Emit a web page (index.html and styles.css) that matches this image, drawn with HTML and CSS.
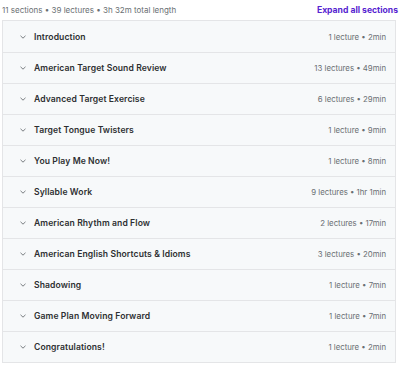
FILE: index.html
```html
<!DOCTYPE html>
<html lang="en">
<head>
    <meta charset="UTF-8">
    <title>Course content</title>
    <link rel="stylesheet" href="styles.css">
</head>
<body>
    <div class="curriculum">
        <div class="summary">
            <span>11 sections • 39 lectures • 3h 32m total length</span>
            <a class="expand" href="#">Expand all sections</a>
        </div>
        <div class="sections">
            <div class="section"><span class="chev"><svg width="6" height="4" viewBox="0 0 6 4"><path d="M0.5 0.8l2.5 2.4 2.5-2.4" fill="none" stroke="#6a6f73" stroke-width="0.9"/></svg></span><span class="title">Introduction</span><span class="meta">1 lecture • 2min</span></div>
            <div class="section"><span class="chev"><svg width="6" height="4" viewBox="0 0 6 4"><path d="M0.5 0.8l2.5 2.4 2.5-2.4" fill="none" stroke="#6a6f73" stroke-width="0.9"/></svg></span><span class="title">American Target Sound Review</span><span class="meta">13 lectures • 49min</span></div>
            <div class="section"><span class="chev"><svg width="6" height="4" viewBox="0 0 6 4"><path d="M0.5 0.8l2.5 2.4 2.5-2.4" fill="none" stroke="#6a6f73" stroke-width="0.9"/></svg></span><span class="title">Advanced Target Exercise</span><span class="meta">6 lectures • 29min</span></div>
            <div class="section"><span class="chev"><svg width="6" height="4" viewBox="0 0 6 4"><path d="M0.5 0.8l2.5 2.4 2.5-2.4" fill="none" stroke="#6a6f73" stroke-width="0.9"/></svg></span><span class="title">Target Tongue Twisters</span><span class="meta">1 lecture • 9min</span></div>
            <div class="section"><span class="chev"><svg width="6" height="4" viewBox="0 0 6 4"><path d="M0.5 0.8l2.5 2.4 2.5-2.4" fill="none" stroke="#6a6f73" stroke-width="0.9"/></svg></span><span class="title">You Play Me Now!</span><span class="meta">1 lecture • 8min</span></div>
            <div class="section"><span class="chev"><svg width="6" height="4" viewBox="0 0 6 4"><path d="M0.5 0.8l2.5 2.4 2.5-2.4" fill="none" stroke="#6a6f73" stroke-width="0.9"/></svg></span><span class="title">Syllable Work</span><span class="meta">9 lectures • 1hr 1min</span></div>
            <div class="section"><span class="chev"><svg width="6" height="4" viewBox="0 0 6 4"><path d="M0.5 0.8l2.5 2.4 2.5-2.4" fill="none" stroke="#6a6f73" stroke-width="0.9"/></svg></span><span class="title">American Rhythm and Flow</span><span class="meta">2 lectures • 17min</span></div>
            <div class="section"><span class="chev"><svg width="6" height="4" viewBox="0 0 6 4"><path d="M0.5 0.8l2.5 2.4 2.5-2.4" fill="none" stroke="#6a6f73" stroke-width="0.9"/></svg></span><span class="title">American English Shortcuts &amp; Idioms</span><span class="meta">3 lectures • 20min</span></div>
            <div class="section"><span class="chev"><svg width="6" height="4" viewBox="0 0 6 4"><path d="M0.5 0.8l2.5 2.4 2.5-2.4" fill="none" stroke="#6a6f73" stroke-width="0.9"/></svg></span><span class="title">Shadowing</span><span class="meta">1 lecture • 7min</span></div>
            <div class="section"><span class="chev"><svg width="6" height="4" viewBox="0 0 6 4"><path d="M0.5 0.8l2.5 2.4 2.5-2.4" fill="none" stroke="#6a6f73" stroke-width="0.9"/></svg></span><span class="title">Game Plan Moving Forward</span><span class="meta">1 lecture • 7min</span></div>
            <div class="section"><span class="chev"><svg width="6" height="4" viewBox="0 0 6 4"><path d="M0.5 0.8l2.5 2.4 2.5-2.4" fill="none" stroke="#6a6f73" stroke-width="0.9"/></svg></span><span class="title">Congratulations!</span><span class="meta">1 lecture • 2min</span></div>
        </div>
    </div>
</body>
</html>
```

FILE: styles.css
```css
/* General styles */
body {
    margin: 0;
    padding: 0;
    background: #ffffff;
    font-family: Inter, "Liberation Sans", sans-serif;
    color: #2d2f31;
}

.curriculum {
    width: 398px;
    padding-top: 3px;
}

/* Summary line */
.summary {
    display: flex;
    justify-content: space-between;
    align-items: center;
    height: 13px;
    padding-left: 2px;
    margin-bottom: 4px;
    font-size: 8px;
    color: #6a6f73;
}

.expand {
    color: #5624d0;
    font-weight: 700;
    font-size: 8.6px;
    text-decoration: none;
}

/* Section list */
.sections {
    margin-left: 2px;
    width: 392px;
    border: 1px solid #e4e5e7;
}

.section {
    display: flex;
    align-items: center;
    height: 30px;
    padding: 0 9px 0 17px;
    background: #f7f9fa;
    border-top: 1px solid #e4e5e7;
}

.section:first-child {
    border-top: none;
    height: 31px;
}

.chev {
    display: flex;
    width: 14px;
}

.title {
    flex: 1;
    font-weight: 600;
    font-size: 8.6px;
    letter-spacing: 0.1px;
}

.meta {
    font-size: 7.8px;
    color: #6a6f73;
}
```
